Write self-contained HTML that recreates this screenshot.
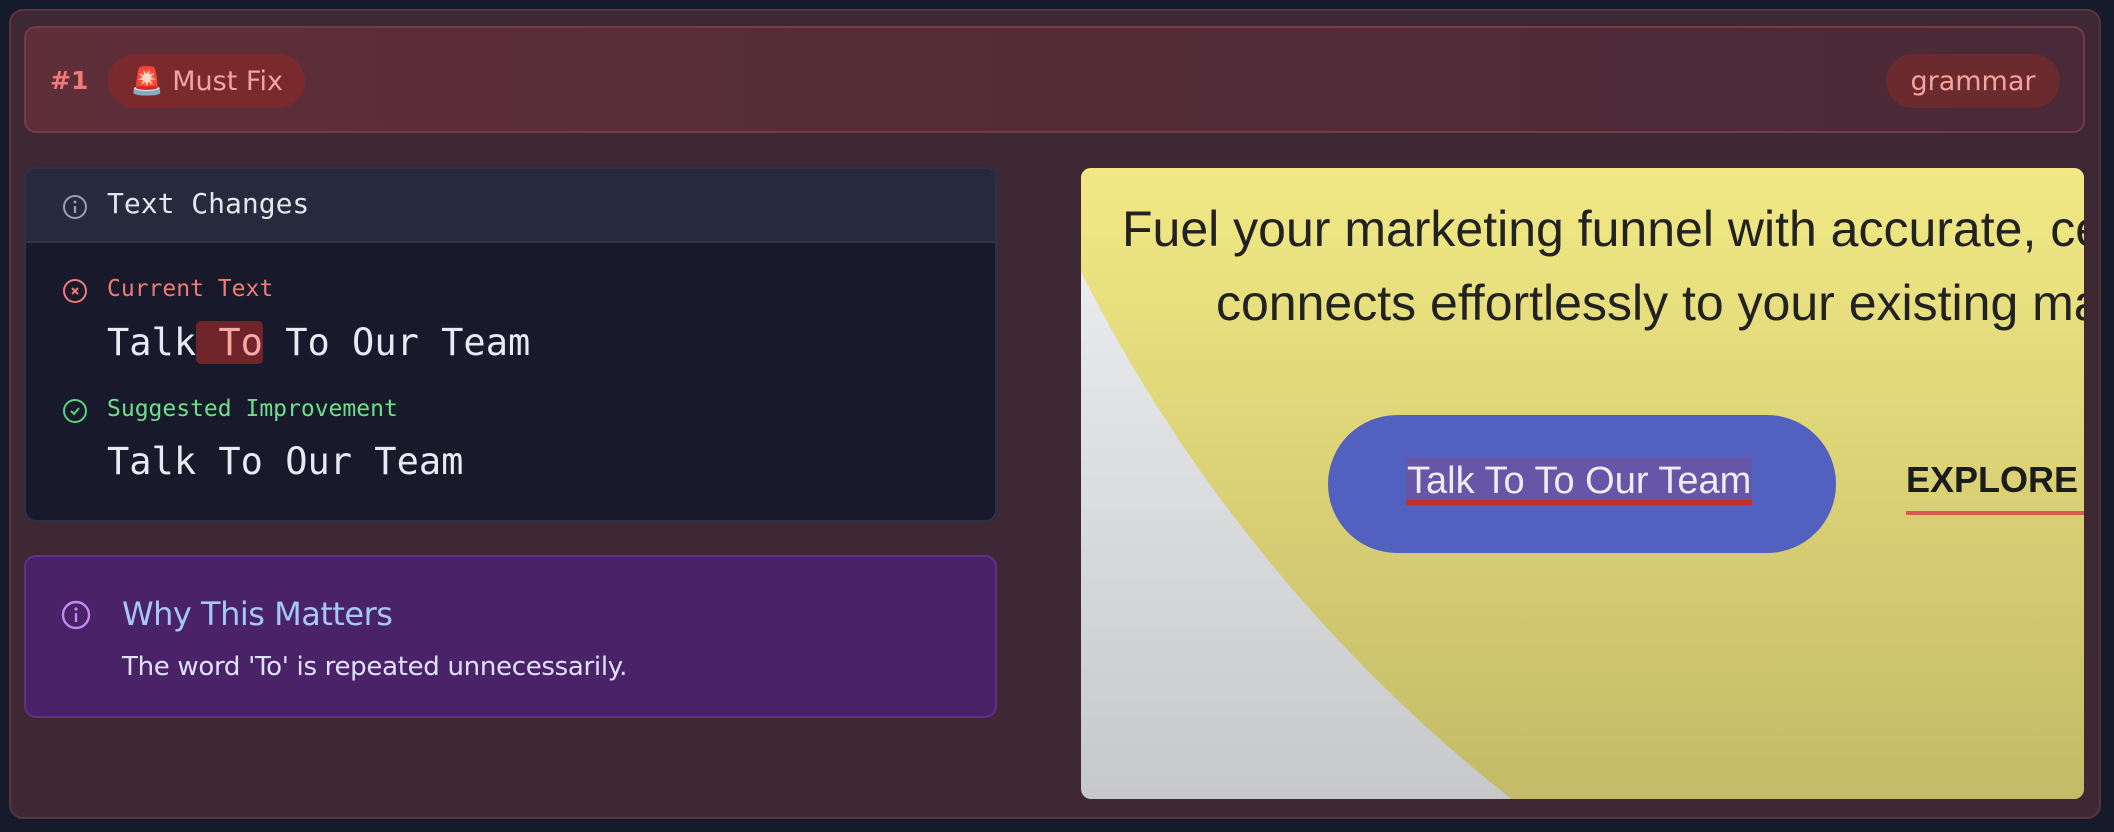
<!DOCTYPE html>
<html><head><meta charset="utf-8"><style>
*{box-sizing:border-box;margin:0;padding:0}
html,body{width:2114px;height:832px;overflow:hidden}
body{background:#161b2c;position:relative;font-family:"Liberation Sans","DejaVu Sans",sans-serif}
.outer{position:absolute;left:9px;top:9px;width:2092px;height:810px;background:#3e2834;border:2px solid #5a3240;border-radius:14px}
.hdr{position:absolute;left:24px;top:26px;width:2061px;height:107px;border:2px solid #7a3a44;border-radius:12px;background:linear-gradient(90deg,#5e2e39,#4a2a38)}
.num{position:absolute;left:50px;top:66px;color:#f07a78;font-size:25px;font-weight:bold;font-family:"DejaVu Sans",sans-serif}
.pill{position:absolute;background:#7a2a2c;border-radius:30px;color:#f6a3a0;font-family:"DejaVu Sans",sans-serif;font-size:27px;display:flex;align-items:center;justify-content:center}
.mono{font-family:"DejaVu Sans Mono","Liberation Mono",monospace}
.tc{position:absolute;left:24px;top:167px;width:973px;height:355px;border:2px solid #2e3244;border-radius:12px;background:#181a2b;overflow:hidden}
.tch{height:74px;background:#262a3c;border-bottom:2px solid #2f3447;position:relative}
.why{position:absolute;left:24px;top:555px;width:973px;height:163px;background:#4a2268;border:2px solid #5e3288;border-radius:12px}
.shot{position:absolute;left:1081px;top:168px;width:1003px;height:631px;border-radius:10px;overflow:hidden;background:linear-gradient(180deg,#f1f2f4,#c7c8c9)}
.circ{position:absolute;left:-167px;top:-2167px;width:3134px;height:3134px;border-radius:50%;background:linear-gradient(180deg,#f2e985 69%,#c4bb68 89%)}
</style></head><body>
<div class="outer"></div>
<div class="hdr"></div>
<div class="num">#1</div>
<div class="pill" style="left:108px;top:54px;width:197px;height:54px">🚨 Must Fix</div>
<div class="pill" style="left:1886px;top:54px;width:174px;height:54px;background:#6a2a2e">grammar</div>

<div class="tc">
 <div class="tch">
  <svg style="position:absolute;left:36px;top:25px" width="26" height="26" viewBox="0 0 26 26"><circle cx="13" cy="13" r="11" fill="none" stroke="#9aa2b4" stroke-width="2"/><line x1="13" y1="12" x2="13" y2="19" stroke="#9aa2b4" stroke-width="2.2"/><circle cx="13" cy="8" r="1.4" fill="#9aa2b4"/></svg>
  <div class="mono" style="position:absolute;left:81px;top:18px;font-size:28px;color:#e4e6ee">Text Changes</div>
 </div>
 <svg style="position:absolute;left:36px;top:109px" width="26" height="26" viewBox="0 0 26 26"><circle cx="13" cy="13" r="11" fill="none" stroke="#f07a78" stroke-width="2"/><path d="M10 10l6 6M16 10l-6 6" stroke="#f07a78" stroke-width="2"/></svg>
 <div class="mono" style="position:absolute;left:81px;top:107px;font-size:23px;color:#f07a78">Current Text</div>
 <div class="mono" style="position:absolute;left:81px;top:152px;font-size:37px;color:#e8eaf2;white-space:pre">Talk<span style="background:#6e2428;color:#f7a9a6;border-radius:5px"> To</span> To Our Team</div>
 <svg style="position:absolute;left:36px;top:229px" width="26" height="26" viewBox="0 0 26 26"><circle cx="13" cy="13" r="11" fill="none" stroke="#5fd07e" stroke-width="2"/><path d="M9 13l3 3 5-6" fill="none" stroke="#5fd07e" stroke-width="2"/></svg>
 <div class="mono" style="position:absolute;left:81px;top:227px;font-size:23px;color:#6ee08a">Suggested Improvement</div>
 <div class="mono" style="position:absolute;left:81px;top:271px;font-size:37px;color:#e8eaf2">Talk To Our Team</div>
</div>

<div class="why">
 <svg style="position:absolute;left:35px;top:43px" width="30" height="30" viewBox="0 0 30 30"><circle cx="15" cy="15" r="13" fill="none" stroke="#c08cf0" stroke-width="2.4"/><line x1="15" y1="13" x2="15" y2="22" stroke="#c08cf0" stroke-width="2.4"/><circle cx="15" cy="9" r="1.6" fill="#c08cf0"/></svg>
 <div style="position:absolute;left:96px;top:38px;font-size:32px;color:#a6c8f8;font-family:'DejaVu Sans',sans-serif;letter-spacing:-0.5px">Why This Matters</div>
 <div style="position:absolute;left:96px;top:95px;font-size:26px;color:#dfe2fb;font-family:'DejaVu Sans',sans-serif;letter-spacing:-0.3px">The word 'To' is repeated unnecessarily.</div>
</div>

<div class="shot">
 <div class="circ"></div>
 <div style="position:absolute;left:41px;top:32px;font-size:50px;color:#222;white-space:nowrap">Fuel your marketing funnel with accurate, ce</div>
 <div style="position:absolute;left:135px;top:106px;font-size:50px;color:#222;white-space:nowrap">connects effortlessly to your existing ma</div>
 <div style="position:absolute;left:247px;top:247px;width:508px;height:138px;border-radius:69px;background:#5261c0"></div>
 <div style="position:absolute;left:325px;top:289px;height:48px;padding:0 1px;background:#6656a8;color:#f0ecf4;font-size:38px;line-height:48px;border-bottom:5px solid #c0302c;white-space:nowrap">Talk To To Our Team</div>
 <div style="position:absolute;left:825px;top:291px;font-size:36px;font-weight:bold;color:#1c1c1c;white-space:nowrap">EXPLORE</div>
 <div style="position:absolute;left:825px;top:343px;width:190px;height:4px;background:#d85a54"></div>
</div>
</body></html>
